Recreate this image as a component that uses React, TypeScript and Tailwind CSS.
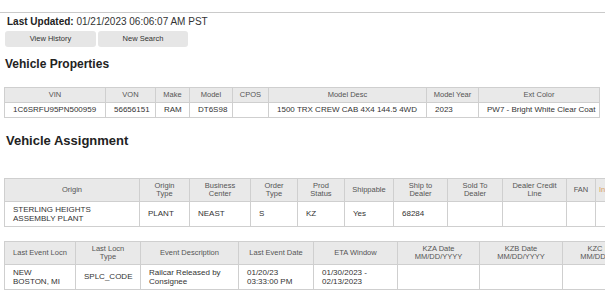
import React from "react";

const th = "border border-[#cfcfcf] bg-[#e9e9e9] text-[#555] font-normal text-center align-middle text-[7.5px] leading-[8px] px-[2px]";
const td = "border border-[#cfcfcf] text-[#333] text-left align-middle text-[8px] leading-[9.5px] pl-[8px] pr-[3px]";

function Props() {
  const cols = [101, 50, 34, 43, 36, 158, 52, 121];
  const heads = ["VIN", "VON", "Make", "Model", "CPOS", "Model Desc", "Model Year", "Ext Color"];
  const vals = ["1C6SRFU95PN500959", "56656151", "RAM", "DT6S98", "", "1500 TRX CREW CAB 4X4 144.5 4WD", "2023", "PW7 - Bright White Clear Coat"];
  return (
    <table className="table-fixed border-collapse mt-[16px]" style={{ width: cols.reduce((a, b) => a + b, 0) }}>
      <colgroup>
        {cols.map((w, i) => (
          <col key={i} style={{ width: w }} />
        ))}
      </colgroup>
      <tbody>
        <tr className="h-[15px]">
          {heads.map((h, i) => (
            <th key={i} className={th}>{h}</th>
          ))}
        </tr>
        <tr className="h-[15px]">
          {vals.map((v, i) => (
            <td key={i} className={td + " whitespace-nowrap overflow-hidden"}>{v}</td>
          ))}
        </tr>
      </tbody>
    </table>
  );
}

function Assign() {
  const cols = [135, 50, 61, 47, 47, 49, 54, 55, 64, 29, 60];
  const heads: React.ReactNode[] = [
    "Origin",
    <>Origin<br />Type</>,
    <>Business<br />Center</>,
    <>Order<br />Type</>,
    <>Prod<br />Status</>,
    "Shippable",
    <>Ship to<br />Dealer</>,
    <>Sold To<br />Dealer</>,
    <>Dealer Credit<br />Line</>,
    "FAN",
    <span className="text-[#d9a05b]">Inv</span>,
  ];
  const vals: React.ReactNode[] = [
    <>STERLING HEIGHTS<br />ASSEMBLY PLANT</>,
    "PLANT", "NEAST", "S", "KZ", "Yes", "68284", "", "", "", "",
  ];
  return (
    <div className="overflow-hidden w-full mt-[29px]">
      <table className="table-fixed border-collapse" style={{ width: cols.reduce((a, b) => a + b, 0) }}>
        <colgroup>
          {cols.map((w, i) => (
            <col key={i} style={{ width: w }} />
          ))}
        </colgroup>
        <tbody>
          <tr className="h-[23px]">
            {heads.map((h, i) => (
              <th key={i} className={th + (i === 10 ? " !text-left pl-[3px]" : "")}>{h}</th>
            ))}
          </tr>
          <tr className="h-[25px]">
            {vals.map((v, i) => (
              <td key={i} className={td}>{v}</td>
            ))}
          </tr>
        </tbody>
      </table>
    </div>
  );
}

function Events() {
  const cols = [71, 65, 98, 75, 84, 82, 83, 83];
  const heads: React.ReactNode[] = [
    "Last Event Locn",
    <>Last Locn<br />Type</>,
    "Event Description",
    "Last Event Date",
    "ETA Window",
    <>KZA Date<br />MM/DD/YYYY</>,
    <>KZB Date<br />MM/DD/YYYY</>,
    <>KZC <span className="text-[#d9a05b]">Date</span><br />MM/DD/YYYY</>,
  ];
  const vals: React.ReactNode[] = [
    <>NEW<br />BOSTON, MI</>,
    "SPLC_CODE",
    <>Railcar Released by<br />Consignee</>,
    <>01/20/23<br />03:33:00 PM</>,
    <>01/30/2023 -<br />02/13/2023</>,
    "", "", "",
  ];
  return (
    <div className="overflow-hidden w-full mt-[14px]">
      <table className="table-fixed border-collapse" style={{ width: cols.reduce((a, b) => a + b, 0) }}>
        <colgroup>
          {cols.map((w, i) => (
            <col key={i} style={{ width: w }} />
          ))}
        </colgroup>
        <tbody>
          <tr className="h-[23px]">
            {heads.map((h, i) => (
              <th key={i} className={th}>{h}</th>
            ))}
          </tr>
          <tr className="h-[25px]">
            {vals.map((v, i) => (
              <td key={i} className={td}>{v}</td>
            ))}
          </tr>
        </tbody>
      </table>
    </div>
  );
}

export default function App() {
  return (
    <div
      className="w-[605px] h-[300px] overflow-hidden bg-white text-[#222]"
      style={{ fontFamily: '"Liberation Sans", Arial, sans-serif' }}
    >
      <div className="h-[12px]" />
      <div className="border-t border-[#cacaca]" />
      <div className="pl-[4px]">
        <p className="mt-[3px] ml-[3px] text-[10px] leading-[12px] text-[#333]">
          <span className="font-bold text-[#222]">Last Updated:</span> 01/21/2023 06:06:07 AM PST
        </p>
        <div className="flex gap-[2px] mt-[3px] ml-[1px]">
          <button className="w-[91px] h-[16px] rounded-[3px] bg-[#e6e6e6] text-[7.5px] text-[#333] leading-[16px]">
            View History
          </button>
          <button className="w-[90px] h-[16px] rounded-[3px] bg-[#e6e6e6] text-[7.5px] text-[#333] leading-[16px]">
            New Search
          </button>
        </div>
        <h2 className="mt-[10px] ml-[1px] text-[12px] leading-[14px] font-bold text-[#222]">Vehicle Properties</h2>
        <Props />
        <h2 className="mt-[15px] ml-[2px] text-[13px] leading-[16px] font-bold text-[#222]">Vehicle Assignment</h2>
        <Assign />
        <Events />
      </div>
    </div>
  );
}
